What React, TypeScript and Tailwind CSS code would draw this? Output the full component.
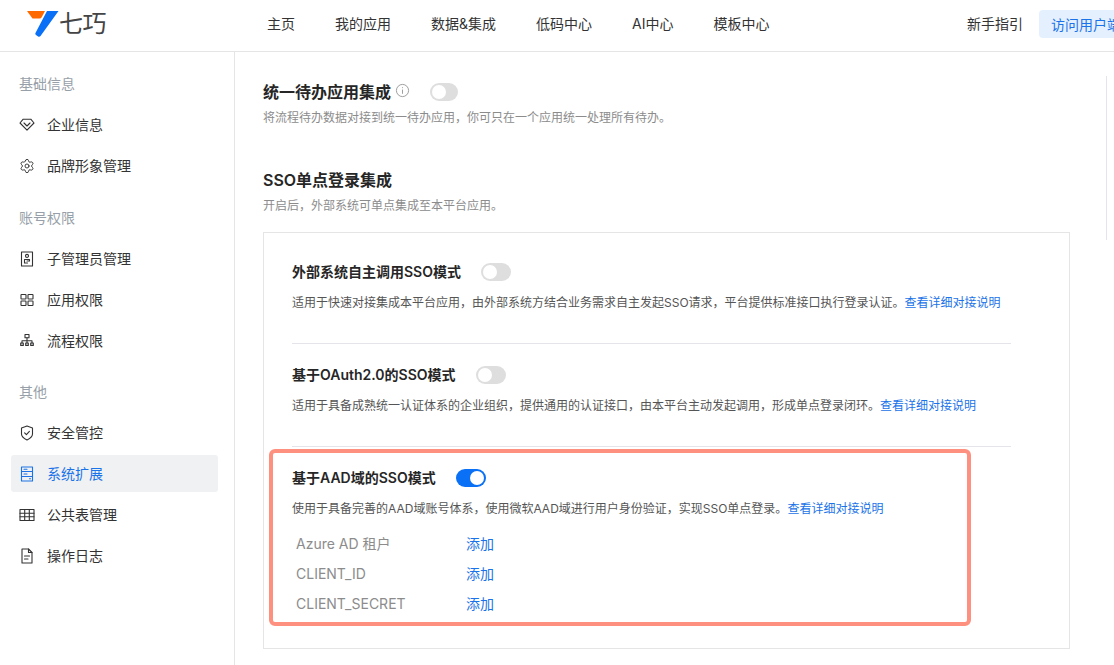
import type { ReactNode } from 'react';
import { Settings } from 'lucide-react';

const font = 'font-["Inter","Noto_Sans_CJK_SC",sans-serif]';

const navItems = ['主页', '我的应用', '数据&集成', '低码中心', 'AI中心', '模板中心'];

function Icon({ children }: { children: ReactNode }) {
  return (
    <svg
      viewBox="0 0 16 16"
      className="size-4 shrink-0"
      fill="none"
      stroke="currentColor"
      strokeWidth="1.1"
      strokeLinejoin="round"
      strokeLinecap="round"
    >
      {children}
    </svg>
  );
}

const icons: Record<string, ReactNode> = {
  diamond: (
    <Icon>
      <path d="M4.2 2.2h7.600L15 6 8 13.200 1 6z" />
      <path d="M5 6l3 3 3-3" />
    </Icon>
  ),
  gear: <Settings className="size-4 shrink-0" strokeWidth={1.4} />,
  badge: (
    <Icon>
      <rect x="2.500" y="1" width="11" height="14" />
      <circle cx="8" cy="4.900" r="1.500" />
      <path d="M5.500 8.500h5M5.500 12h3M5.500 8.500V12M10.500 8.500V10H8" />
    </Icon>
  ),
  grid: (
    <Icon>
      <rect x="2" y="2.500" width="5" height="4.500" rx=".6" />
      <rect x="9" y="2.500" width="5" height="4.500" rx=".6" />
      <rect x="2" y="9" width="5" height="4.500" rx=".6" />
      <rect x="9" y="9" width="5" height="4.500" rx=".6" />
    </Icon>
  ),
  tree: (
    <Icon>
      <rect x="6" y="1.500" width="4" height="3.200" />
      <path d="M8 4.700v3M3 10V7.700h10V10M8 7.700V10" />
      <rect x="1.700" y="10" width="2.600" height="2.400" />
      <rect x="6.700" y="10" width="2.600" height="2.400" />
      <rect x="11.700" y="10" width="2.600" height="2.400" />
    </Icon>
  ),
  shield: (
    <Icon>
      <path d="M8 1l5.500 2v6c0 2.400-2.600 4.600-5.500 6-2.900-1.400-5.500-3.600-5.500-6V3z" />
      <path d="M5.600 7.800l1.800 1.800 3-3.200" />
    </Icon>
  ),
  server: (
    <Icon>
      <rect x="2.500" y="1" width="11" height="14" />
      <path d="M2.500 5.500h11M2.500 10.500h11M5 3.300h3M5 8h3M10.500 12.800h1" />
    </Icon>
  ),
  table: (
    <Icon>
      <rect x="1" y="2.500" width="14" height="11" />
      <path d="M1 6.200h14M1 9.800h14M5.700 2.500v11M10.300 2.500v11" />
    </Icon>
  ),
  file: (
    <Icon>
      <path d="M3 1h6.500L13 4.500V15H3z" />
      <path d="M9.500 1v3.500H13M5.500 8h5M5.500 11h3.500" />
    </Icon>
  ),
};

const menu = [
  {
    label: '基础信息',
    space: 'mb-[22px]',
    items: [
      { icon: 'diamond', text: '企业信息' },
      { icon: 'gear', text: '品牌形象管理' },
    ],
  },
  {
    label: '账号权限',
    space: 'mb-[21px]',
    items: [
      { icon: 'badge', text: '子管理员管理' },
      { icon: 'grid', text: '应用权限' },
      { icon: 'tree', text: '流程权限' },
    ],
  },
  {
    label: '其他',
    space: '',
    items: [
      { icon: 'shield', text: '安全管控' },
      { icon: 'server', text: '系统扩展', active: true },
      { icon: 'table', text: '公共表管理' },
      { icon: 'file', text: '操作日志' },
    ],
  },
];

function Toggle({ on, className }: { on?: boolean; className?: string }) {
  return (
    <span
      className={`flex h-[18px] shrink-0 items-center rounded-full px-[2px] ${
        on ? 'justify-end bg-[#0a70f5]' : 'justify-start bg-[#dedede]'
      } ${className ?? 'w-[30px]'}`}
    >
      <span className="size-[14px] rounded-full bg-white" />
    </span>
  );
}

function Mode({
  title,
  desc,
  children,
  on,
  className,
}: {
  title: string;
  desc: string;
  children?: ReactNode;
  on?: boolean;
  className: string;
}) {
  return (
    <div className={className}>
      <div className="flex h-[20px] items-center gap-5">
        <span className="text-[14px] font-semibold leading-5 text-[#262626]">{title}</span>
        <Toggle on={on} />
      </div>
      <p className="mt-[11px] text-[12px] leading-5 text-[#555]">
        {desc}
        <a className="text-[#1a73e8]">查看详细对接说明</a>
      </p>
      {children}
    </div>
  );
}

export default function App() {
  return (
    <div className={`relative flex h-[665px] w-[1114px] flex-col overflow-hidden bg-white ${font}`}>
      <header className="flex h-[52px] shrink-0 items-center overflow-hidden border-b border-[#e5e5e5] pb-[3px]">
        <div className="flex w-[267px] shrink-0 items-center pl-[27px]">
          <svg viewBox="0 0 32 26" className="h-[26px] w-[32px] shrink-0">
            <path d="M0 0h18l-3.500 6.500c-.4.600-1 .900-1.700.900H5.500z" fill="#ff6a00" />
            <path d="M20 0h11.500L13.500 25c-.6.800-1.600 1-2.400.400L9 24c-.7-.500-.9-1.400-.4-2.200z" fill="#0a70f5" />
          </svg>
          <span className="text-[24px] font-normal leading-none tracking-[-0.5px] text-[#444]">七巧</span>
        </div>
        <nav className="flex gap-10 text-[14px] leading-5 text-[#333]">
          {navItems.map((item) => (
            <span key={item} className="shrink-0">
              {item}
            </span>
          ))}
        </nav>
        <span className="ml-auto shrink-0 text-[14px] leading-5 text-[#333]">新手指引</span>
        <span className="ml-4 -mr-[25px] flex h-[28px] w-[100px] shrink-0 items-center rounded-[4px] bg-[#e5f0ff] pl-3 text-[14px] whitespace-nowrap text-[#1a73e8]">
          访问用户端
        </span>
      </header>

      <div className="flex min-h-0 flex-1">
        <aside className="w-[235px] shrink-0 border-r border-[#e5e5e5] pr-[16px] pl-[11px] pt-[20px]">
          {menu.map((group) => (
            <div key={group.label} className={group.space}>
              <div className="h-[24px] pl-2 text-[14px] leading-[24px] text-[#97a0a8]">{group.label}</div>
              <div className="mt-[10px] flex flex-col gap-1">
                {group.items.map((item) => (
                  <div
                    key={item.text}
                    className={`flex h-[37px] items-center gap-[12px] rounded-[3px] pl-2 text-[14px] ${
                      item.active ? 'bg-[#f0f1f3] text-[#1a73e8]' : 'text-[#333]'
                    }`}
                  >
                    {icons[item.icon]}
                    <span>{item.text}</span>
                  </div>
                ))}
              </div>
            </div>
          ))}
        </aside>

        <main className="min-w-0 flex-1 pl-[28px] pt-[28px]">
          <div className="flex h-[24px] items-center">
            <h2 className="text-[16px] font-semibold leading-6 text-[#262626]">统一待办应用集成</h2>
            <svg viewBox="0 0 16 16" className="ml-1 -mt-[3px] size-[15px] text-[#999]" fill="none" stroke="currentColor" strokeWidth="1">
              <circle cx="8" cy="8" r="6.500" />
              <path d="M8 7v4.500M8 4.500v1" />
            </svg>
            <Toggle className="ml-[20px] w-[28px]" />
          </div>
          <p className="mt-[4px] text-[12px] leading-5 text-[#8c8c8c]">
            将流程待办数据对接到统一待办应用，你可只在一个应用统一处理所有待办。
          </p>

          <h2 className="mt-[40px] text-[16px] font-semibold leading-6 text-[#262626]">SSO单点登录集成</h2>
          <p className="mt-[4px] text-[12px] leading-5 text-[#8c8c8c]">开启后，外部系统可单点集成至本平台应用。</p>

          <section className="mt-[16px] h-[417px] w-[807px] border border-[#e5e5e5] px-[28px]">
            <div className="w-[719px]">
              <Mode
                className="h-[111px] border-b border-[#e4e4ea] pt-[29px]"
                title="外部系统自主调用SSO模式"
                desc="适用于快速对接集成本平台应用，由外部系统方结合业务需求自主发起SSO请求，平台提供标准接口执行登录认证。"
              />
              <Mode
                className="h-[103px] border-b border-[#e4e4ea] pt-[21px]"
                title="基于OAuth2.0的SSO模式"
                desc="适用于具备成熟统一认证体系的企业组织，提供通用的认证接口，由本平台主动发起调用，形成单点登录闭环。"
              />
              <Mode
                on
                className="pt-[21px]"
                title="基于AAD域的SSO模式"
                desc="使用于具备完善的AAD域账号体系，使用微软AAD域进行用户身份验证，实现SSO单点登录。"
              >
                <div className="mt-[10px] flex flex-col pl-1">
                  {['Azure AD 租户', 'CLIENT_ID', 'CLIENT_SECRET'].map((label) => (
                    <div key={label} className="flex h-[30px] items-center text-[14px] leading-5">
                      <span className="w-[170px] text-[#8c8c8c]">{label}</span>
                      <a className="text-[#1a73e8]">添加</a>
                    </div>
                  ))}
                </div>
              </Mode>
            </div>
          </section>
        </main>
      </div>

      <div className="absolute left-[269px] top-[449px] h-[177px] w-[702px] rounded-[6px] border-4 border-[#fe9080]" />
      <div className="absolute left-[1106px] top-[76px] h-[164px] w-px bg-[#e3e5ea]" />
    </div>
  );
}
